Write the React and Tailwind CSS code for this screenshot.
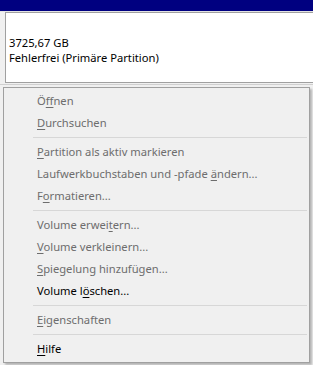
import React from "react";

const font = { fontFamily: '"Noto Sans", "Open Sans", sans-serif' };

function Item({ pre = "", u, post = "", enabled = false }) {
  return (
    <div
      className={`h-[22px] flex items-center pl-[33px] text-[11.2px] leading-none whitespace-nowrap ${
        enabled ? "text-black" : "text-[#6d6d6d]"
      }`}
    >
      <span>
        {pre}
        <span className="underline decoration-1 underline-offset-[2px]">{u}</span>
        {post}
      </span>
    </div>
  );
}

function Sep() {
  return (
    <div className="h-[7px] flex items-center pl-[29px] pr-[2px]">
      <div className="h-px w-full bg-[#d7d7d7]" />
    </div>
  );
}

export default function App() {
  return (
    <div className="relative w-[313px] h-[365px] bg-[#f0f0f0] overflow-hidden" style={font}>
      <div className="h-[11px] bg-[#000080]" />
      <div className="h-[1px] bg-[#e3e3e3]" />
      <div className="pl-[5px] h-[71px] flex flex-col">
        <div className="flex-1 bg-white border-l border-t border-b border-[#a0a0a0] pt-[22px] pl-[3px] text-[11.2px] leading-[15px] text-black">
          <div>3725,67 GB</div>
          <div>Fehlerfrei (Primäre Partition)</div>
        </div>
      </div>
      <div className="h-px bg-[#d0d0d0] mt-[1px]" />

      <div className="absolute left-[3px] top-[87px] w-[307px] h-[276px] bg-[#f0f0f0] border border-[#a0a0a0] shadow-[2px_2px_2px_rgba(0,0,0,0.25)] pt-[2px]">
        <Item pre="Ö" u="f" post="fnen" />
        <Item u="D" post="urchsuchen" />
        <Sep />
        <Item u="P" post="artition als aktiv markieren" />
        <Item pre="Laufwerkbuchstaben und -pfade " u="ä" post="ndern..." />
        <Item pre="F" u="o" post="rmatieren..." />
        <Sep />
        <Item pre="Volume erwei" u="t" post="ern..." />
        <Item u="V" post="olume verkleinern..." />
        <Item u="S" post="piegelung hinzufügen..." />
        <Item pre="Volume l" u="ö" post="schen..." enabled />
        <Sep />
        <Item u="E" post="igenschaften" />
        <Sep />
        <Item u="H" post="ilfe" enabled />
      </div>
    </div>
  );
}
